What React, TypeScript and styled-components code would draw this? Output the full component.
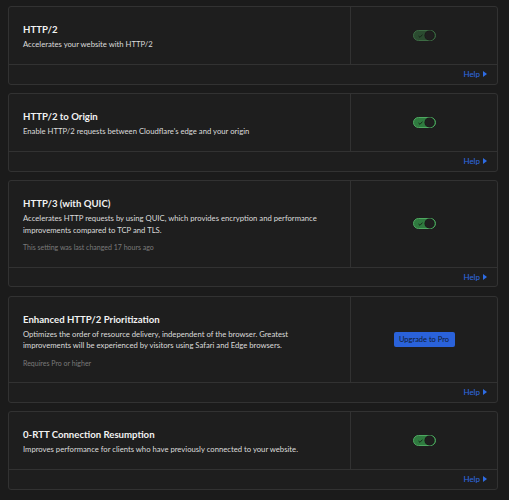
import styled, { createGlobalStyle } from "styled-components";

const GlobalStyle = createGlobalStyle`
    html, body {
        margin: 0;
        background: #1b1b1b;
    }
    body {
        font-family: Lato, "Liberation Sans", sans-serif;
        color: #e6e6e6;
    }
`;

const Page = styled.div`
    display: flex;
    flex-direction: column;
    gap: 8.5px;
    width: 490px;
    padding: 6px 0 0 8px;
`;

const Card = styled.section`
    background: #1e1e1e;
    border: 1px solid #323232;
    border-radius: 3px;
    box-sizing: border-box;
`;

const CardBody = styled.div`
    display: grid;
    grid-template-columns: 342px 1fr;
    border-bottom: 1px solid #323232;
`;

const Info = styled.div`
    padding: 16px 14px 13.5px 14px;
    border-right: 1px solid #323232;
`;

const Title = styled.h3`
    margin: 0 0 2px;
    font-size: 9.6px;
    line-height: 14px;
    font-weight: 700;
    color: #f2f2f2;
`;

const Desc = styled.p`
    margin: 0;
    font-size: 7.7px;
    line-height: 11.5px;
    color: #dcdcdc;
    max-width: 318px;
`;

const Note = styled.p`
    margin: 6px 0 0;
    font-size: 7px;
    line-height: 11px;
    color: #7a7a7a;
`;

const Control = styled.div`
    display: flex;
    align-items: center;
    justify-content: center;
`;

const Track = styled.div<{ $dim?: boolean }>`
    width: 23px;
    height: 11px;
    box-sizing: border-box;
    border-radius: 6px;
    border: 1px solid ${(p) => (p.$dim ? "#3d6b44" : "#4fa861")};
    background: ${(p) => (p.$dim ? "#2b4b30" : "#2f7a3f")};
    display: flex;
    align-items: center;
    justify-content: space-between;
    padding: 0 1px 0 4px;
`;

const Knob = styled.span`
    width: 9px;
    height: 9px;
    border-radius: 50%;
    background: #1f1f1f;
    box-shadow: 0 0 0 0.5px #151515;
`;

const UpgradeButton = styled.button`
    font-family: inherit;
    font-size: 7.5px;
    width: 61px;
    height: 15px;
    padding: 0;
    border: none;
    border-radius: 2px;
    background: #2a62da;
    color: #111b30;
    cursor: pointer;
`;

const Footer = styled.div`
    display: flex;
    justify-content: flex-end;
    align-items: center;
    height: 18.5px;
    padding-right: 10px;
`;

const HelpLink = styled.a`
    display: flex;
    align-items: center;
    gap: 3px;
    font-size: 8px;
    color: #2e6ce4;
    text-decoration: none;
`;

const Check = () => (
    <svg width="5" height="4" viewBox="0 0 5 4">
        <path d="M0.5 2 L2 3.3 L4.5 0.6" fill="none" stroke="#152016" strokeWidth="0.9" />
    </svg>
);

const Toggle = ({ dim }: { dim?: boolean }) => (
    <Track $dim={dim}>
        <Check />
        <Knob />
    </Track>
);

type Setting = {
    title: string;
    desc: string;
    note?: string;
    upgrade?: boolean;
    dim?: boolean;
};

const settings: Setting[] = [
    { title: "HTTP/2", desc: "Accelerates your website with HTTP/2", dim: true },
    { title: "HTTP/2 to Origin", desc: "Enable HTTP/2 requests between Cloudflare's edge and your origin" },
    {
        title: "HTTP/3 (with QUIC)",
        desc: "Accelerates HTTP requests by using QUIC, which provides encryption and performance improvements compared to TCP and TLS.",
        note: "This setting was last changed 17 hours ago",
    },
    {
        title: "Enhanced HTTP/2 Prioritization",
        desc: "Optimizes the order of resource delivery, independent of the browser. Greatest improvements will be experienced by visitors using Safari and Edge browsers.",
        note: "Requires Pro or higher",
        upgrade: true,
    },
    { title: "0-RTT Connection Resumption", desc: "Improves performance for clients who have previously connected to your website." },
];

export default function App() {
    return (
        <>
            <GlobalStyle />
            <Page>
                {settings.map((s) => (
                    <Card key={s.title}>
                        <CardBody>
                            <Info>
                                <Title>{s.title}</Title>
                                <Desc>{s.desc}</Desc>
                                {s.note && <Note>{s.note}</Note>}
                            </Info>
                            <Control>
                                {s.upgrade ? <UpgradeButton>Upgrade to Pro</UpgradeButton> : <Toggle dim={s.dim} />}
                            </Control>
                        </CardBody>
                        <Footer>
                            <HelpLink href="#">
                                Help
                                <svg width="4" height="6" viewBox="0 0 4 6">
                                    <path d="M0 0 L4 3 L0 6 Z" fill="#2e6ce4" />
                                </svg>
                            </HelpLink>
                        </Footer>
                    </Card>
                ))}
            </Page>
        </>
    );
}
